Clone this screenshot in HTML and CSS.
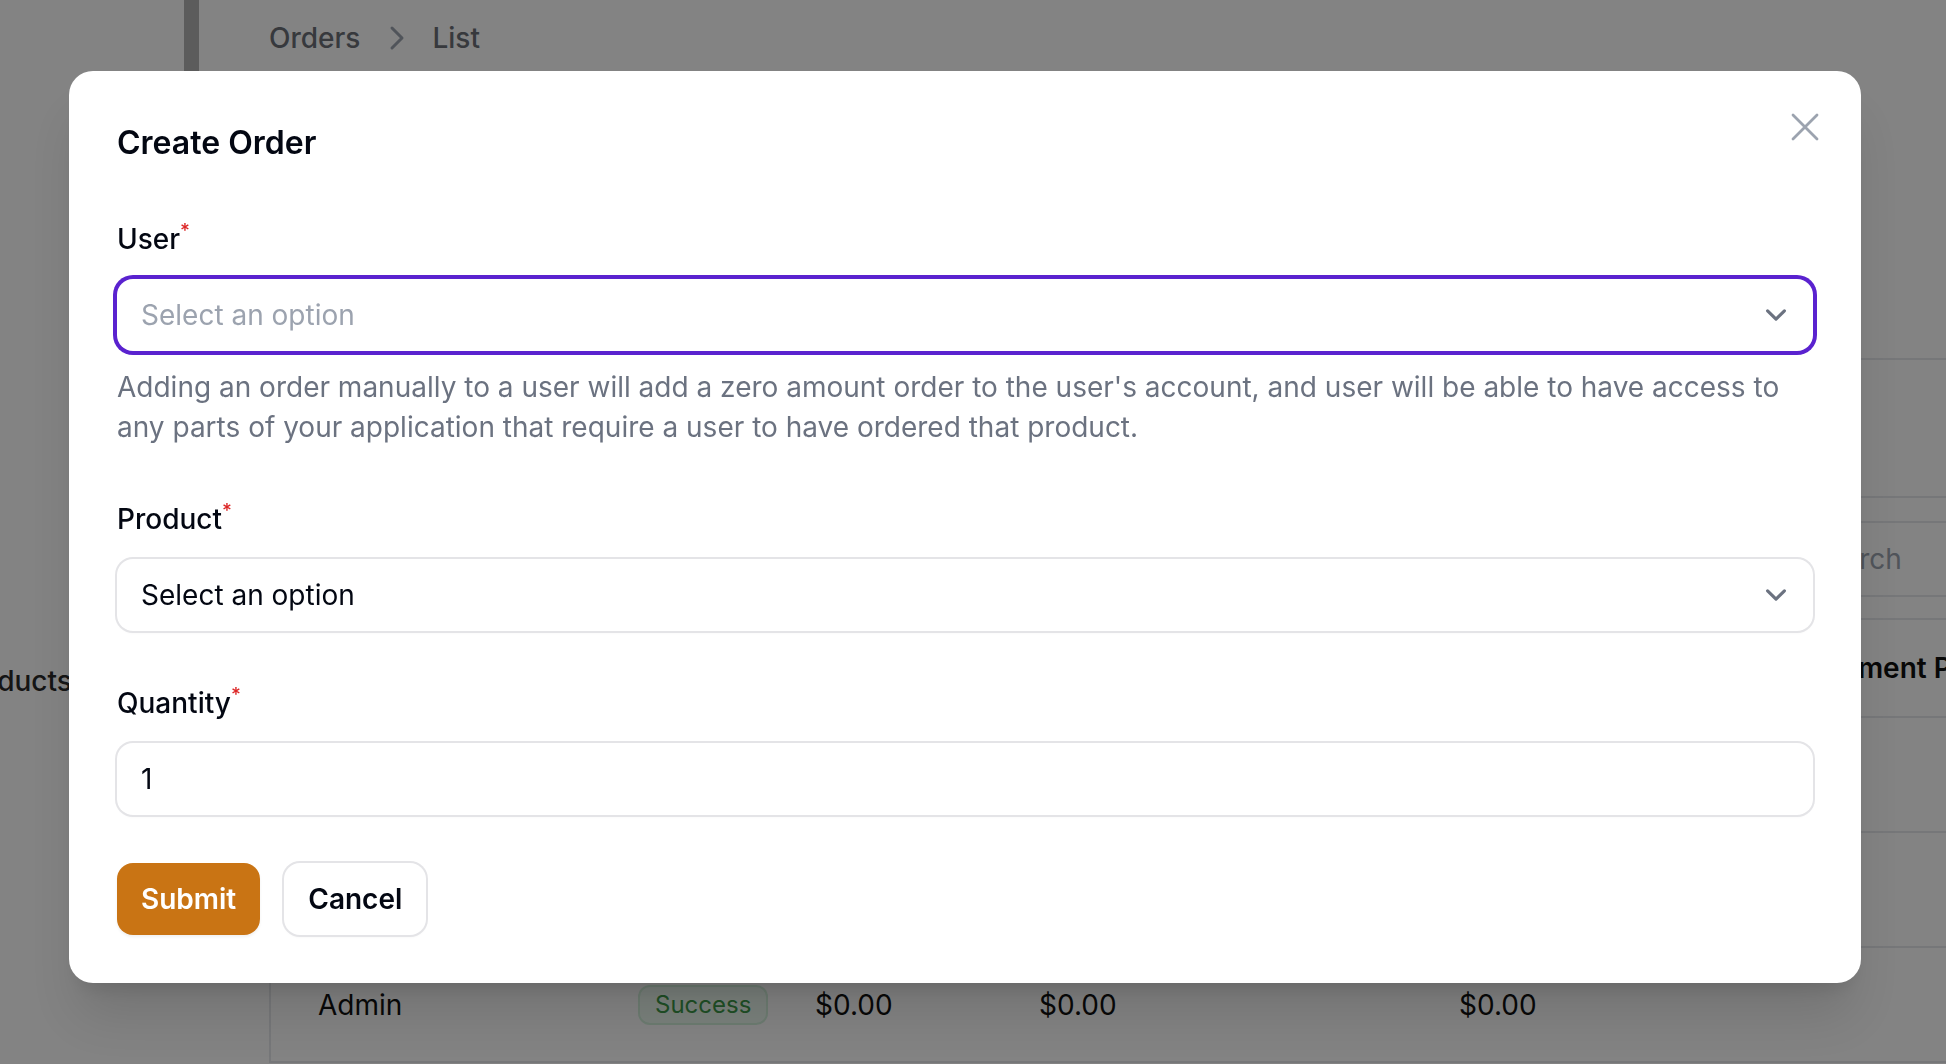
FILE: index.html
```html
<!DOCTYPE html>
<html lang="en">
<head>
<meta charset="utf-8">
<title>Orders - List</title>
<link rel="stylesheet" href="styles.css">
</head>
<body>
<div class="page">
  <aside class="sidebar">
    <div class="nav-item">Products</div>
  </aside>
  <div class="scrollbar"><div class="thumb"></div></div>
  <main class="main">
    <nav class="crumbs">
      <span>Orders</span>
      <svg class="crumb-sep" viewBox="0 0 20 20" width="40" height="40"><path d="M8 5l5 5-5 5" fill="none" stroke="#9ca3af" stroke-width="1.5" stroke-linecap="round" stroke-linejoin="round"/></svg>
      <span>List</span>
    </nav>
    <section class="card">
      <div class="card-head"></div>
      <div class="toolbar">
        <div class="search"><span class="search-text">Search</span></div>
      </div>
      <div class="trow thead">
        <span></span><span></span><span></span><span></span><span></span><span class="th">Payment Provider</span>
      </div>
      <div class="trow"></div>
      <div class="trow"></div>
      <div class="trow">
        <span>Admin</span>
        <span><span class="badge">Success</span></span>
        <span>$0.00</span>
        <span>$0.00</span>
        <span>$0.00</span>
        <span></span>
      </div>
    </section>
  </main>
</div>

<div class="overlay"></div>

<div class="modal" role="dialog" aria-labelledby="modal-title">
  <button class="close" type="button" aria-label="Close">
    <svg viewBox="0 0 24 24" width="48" height="48"><path d="M6 18L18 6M6 6l12 12" fill="none" stroke="#9ca3af" stroke-width="1.4" stroke-linecap="round" stroke-linejoin="round"/></svg>
  </button>
  <h2 class="modal-title" id="modal-title">Create Order</h2>
  <div class="form">
    <div class="field">
      <label class="label">User<sup class="req">*</sup></label>
      <div class="control select focused">
        <span class="placeholder">Select an option</span>
        <svg class="chev" viewBox="0 0 20 20" width="42" height="42"><path d="M6 8l4 4 4-4" fill="none" stroke="#6b7280" stroke-width="1.5" stroke-linecap="round" stroke-linejoin="round"/></svg>
      </div>
      <p class="help">Adding an order manually to a user will add a zero amount order to the user's account, and user will be able to have access to any parts of your application that require a user to have ordered that product.</p>
    </div>
    <div class="field">
      <label class="label">Product<sup class="req">*</sup></label>
      <div class="control select">
        <span class="value">Select an option</span>
        <svg class="chev" viewBox="0 0 20 20" width="42" height="42"><path d="M6 8l4 4 4-4" fill="none" stroke="#6b7280" stroke-width="1.5" stroke-linecap="round" stroke-linejoin="round"/></svg>
      </div>
    </div>
    <div class="field">
      <label class="label">Quantity<sup class="req">*</sup></label>
      <div class="control">
        <span class="value">1</span>
      </div>
    </div>
  </div>
  <div class="footer">
    <button class="btn btn-primary" type="button">Submit</button>
    <button class="btn btn-secondary" type="button">Cancel</button>
  </div>
</div>
</body>
</html>
```

FILE: styles.css
```css
* { box-sizing: border-box; }

html, body {
  margin: 0;
  padding: 0;
  width: 1946px;
  height: 1064px;
  overflow: hidden;
  font-family: "Inter", "Noto Sans", sans-serif;
  color: #030712;
  background: #ffffff;
}

.page {
  display: flex;
  height: 1064px;
}

.sidebar {
  width: 184px;
  flex: none;
  background: #ffffff;
  padding-top: 657px;
  overflow: hidden;
}

.nav-item {
  margin-left: -48px;
  font-size: 28px;
  line-height: 48px;
  font-weight: 500;
  color: #2a2a2a;
  white-space: nowrap;
}

.scrollbar {
  width: 15px;
  flex: none;
  background: #ffffff;
}

.thumb {
  height: 300px;
  background: #b3b3b3;
}

.main {
  flex: 1;
  padding-left: 70px;
  margin-right: -40px;
  min-width: 0;
}

.crumbs {
  display: flex;
  align-items: center;
  gap: 16px;
  padding-top: 18px;
  height: 58px;
  font-size: 28px;
  line-height: 40px;
  font-weight: 500;
  color: #6b6f77;
}

.card {
  margin-top: 300px;
  border-top: 2px solid #e5e7eb;
  border-left: 2px solid #e5e7eb;
  background: #ffffff;
}

.card-head {
  height: 138px;
  border-bottom: 2px solid #e5e7eb;
}

.toolbar {
  height: 122px;
  border-bottom: 2px solid #e5e7eb;
  padding: 23px 0 0 1430px;
}

.search {
  width: 320px;
  height: 76px;
  border: 2px solid #e5e7eb;
  border-radius: 16px;
  display: flex;
  align-items: center;
  padding-left: 106px;
}

.search-text {
  font-size: 28px;
  color: #9ca3af;
}

.trow {
  display: grid;
  grid-template-columns: 320px 177px 224px 420px 349px 1fr;
  align-items: center;
  height: 115px;
  padding-left: 47px;
  border-bottom: 2px solid #e5e7eb;
  font-size: 28px;
  color: #111111;
  white-space: nowrap;
}

.thead {
  height: 98px;
}

.th {
  font-weight: 600;
  color: #111111;
}

.badge {
  display: inline-block;
  padding: 2px 15px;
  border: 2px solid rgba(22, 163, 74, 0.12);
  border-radius: 12px;
  background: #eefcf2;
  color: #3e9a4a;
  font-size: 24px;
  line-height: 32px;
  font-weight: 400;
}

.overlay {
  position: fixed;
  inset: 0;
  background: rgba(0, 0, 0, 0.487);
}

.modal {
  position: absolute;
  left: 69px;
  top: 71px;
  width: 1792px;
  padding: 48px;
  background: #ffffff;
  border-radius: 24px;
  display: flex;
  flex-direction: column;
  gap: 48px;
  box-shadow: 0 40px 50px -10px rgba(0, 0, 0, 0.12), 0 16px 20px -12px rgba(0, 0, 0, 0.12);
}

.close {
  position: absolute;
  top: 32px;
  right: 32px;
  width: 48px;
  height: 48px;
  padding: 0;
  border: 0;
  background: transparent;
  display: flex;
}

.modal-title {
  margin: 0;
  font-size: 32px;
  line-height: 48px;
  font-weight: 600;
  color: #030712;
}

.form {
  display: flex;
  flex-direction: column;
  gap: 48px;
}

.field {
  display: flex;
  flex-direction: column;
  gap: 16px;
}

.label {
  font-size: 28px;
  line-height: 48px;
  font-weight: 500;
  color: #030712;
}

.req {
  color: #dc2626;
  font-weight: 500;
  font-size: 19px;
  line-height: 0;
  margin-left: 0;
  vertical-align: 12px;
}

.control {
  height: 72px;
  border-radius: 16px;
  box-shadow: 0 0 0 2px #e4e4e7, 0 2px 3px rgba(0, 0, 0, 0.04);
  display: flex;
  align-items: center;
  padding: 0 24px;
  font-size: 28px;
  line-height: 48px;
  color: #030712;
}

.control.focused {
  box-shadow: 0 0 0 4px #5a22cf;
}

.select {
  padding-right: 16px;
  justify-content: space-between;
}

.placeholder {
  color: #9ca3af;
}

.chev {
  flex: none;
}

.help {
  margin: 0;
  font-size: 28px;
  line-height: 40px;
  color: #6b7280;
}

.footer {
  display: flex;
  gap: 24px;
}

.btn {
  height: 72px;
  padding: 0 24px;
  border-radius: 16px;
  font-family: "Inter", "Noto Sans", sans-serif;
  font-size: 28px;
  font-weight: 600;
  line-height: 40px;
  border: 0;
  cursor: pointer;
}

.btn-primary {
  background: #c97414;
  color: #ffffff;
  box-shadow: 0 2px 3px rgba(0, 0, 0, 0.06);
}

.btn-secondary {
  background: #ffffff;
  color: #030712;
  box-shadow: 0 0 0 2px #e4e4e7, 0 2px 3px rgba(0, 0, 0, 0.05);
}
```
